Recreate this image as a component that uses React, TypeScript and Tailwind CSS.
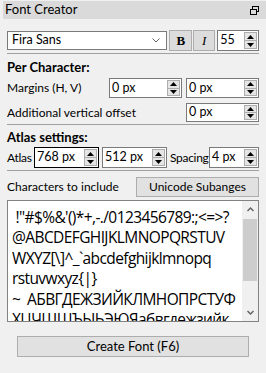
import React from "react";

const ui = { fontFamily: "Lato, 'Noto Sans', sans-serif" };

function Arrows() {
  return (
    <div className="my-[1px] mr-[1px] flex w-[13px] flex-col border border-[#adadad] bg-[#e5e5e5]">
      <div className="flex flex-1 items-center justify-center border-b border-[#adadad]">
        <svg width="7" height="4" viewBox="0 0 7 4">
          <path d="M0 4 L3.5 0 L7 4 Z" fill="#000" />
        </svg>
      </div>
      <div className="flex flex-1 items-center justify-center">
        <svg width="7" height="4" viewBox="0 0 7 4">
          <path d="M0 0 L3.5 4 L7 0 Z" fill="#000" />
        </svg>
      </div>
    </div>
  );
}

function Spin({
  value,
  className,
  focus,
}: {
  value: string;
  className: string;
  focus?: boolean;
}) {
  return (
    <div
      className={
        "flex items-stretch bg-white border " +
        (focus ? "border-black " : "border-[#7a7a7a] ") +
        className
      }
    >
      <div className="flex flex-1 items-center pl-[2px] text-[12.5px] text-black">
        {value}
      </div>
      <Arrows />
    </div>
  );
}

function Separator() {
  return <div className="mx-[7px] h-px bg-[#a0a0a0]" />;
}

const charLines = [
  " !\"#$%&'()*+,-./0123456789:;<=>?",
  "@ABCDEFGHIJKLMNOPQRSTUV",
  "WXYZ[\\]^_`abcdefghijklmnopq",
  "rstuvwxyz{|}",
  "~  АБВГДЕЖЗИЙКЛМНОПРСТУФ",
  "ХЦЧШЩЪЫЬЭЮЯабвгдежзийк",
];

export default function App() {
  return (
    <div
      className="h-[373px] w-[266px] overflow-hidden bg-[#f0f0f0] text-[12px] text-black"
      style={ui}
    >
      {/* title bar */}
      <div className="ml-[3px] mt-[1px] flex h-[18px] items-center justify-between bg-[#dadada] pl-[2px] pr-[7px]">
        <span className="text-[13px]">Font Creator</span>
        <svg width="9" height="9" viewBox="0 0 9 9">
          <rect x="2.5" y="0.5" width="6" height="5" fill="none" stroke="#000" />
          <rect x="0.5" y="3.5" width="6" height="5" fill="#dadada" stroke="#000" />
        </svg>
      </div>

      {/* font row */}
      <div className="mx-[7px] mt-[11px] flex h-[21px] items-stretch gap-[1px]">
        <div className="my-[1px] flex w-[161px] items-center justify-between border border-[#7a7a7a] bg-white pl-[4px] pr-[6px] text-[12.5px]">
          <span>Fira Sans</span>
          <svg width="8" height="5" viewBox="0 0 8 5">
            <path d="M0.5 0.5 L4 4 L7.5 0.5" fill="none" stroke="#606060" />
          </svg>
        </div>
        <div className="ml-[1px] flex w-[23px] items-center justify-center border border-[#adadad] bg-[#dcdcdc]">
          <span className="text-[13px] font-bold" style={{ fontFamily: "'Liberation Serif', serif" }}>
            B
          </span>
        </div>
        <div className="flex w-[22px] items-center justify-center border border-[#adadad] bg-[#dcdcdc]">
          <span className="text-[13px] italic" style={{ fontFamily: "'Liberation Serif', serif" }}>
            I
          </span>
        </div>
        <Spin value="55" className="ml-[1px] w-[42px]" />
      </div>

      <div className="mt-[2px]">
        <Separator />
      </div>

      {/* per character */}
      <div className="mx-[7px] mt-[6px] text-[13px] font-bold leading-[14px]">Per Character:</div>
      <div className="mx-[7px] mt-[4px] flex h-[20px] items-stretch">
        <div className="flex w-[102px] items-center">Margins (H, V)</div>
        <Spin value="0 px" className="w-[73px]" />
        <Spin value="0 px" className="ml-[4px] w-[73px]" />
      </div>
      <div className="mx-[7px] mt-[5px] flex h-[19px] items-stretch">
        <div className="flex w-[179px] items-center">Additional vertical offset</div>
        <Spin value="0 px" className="w-[73px]" />
      </div>

      <div className="mt-[2px]">
        <Separator />
      </div>

      {/* atlas */}
      <div className="mx-[7px] mt-[5px] text-[13px] font-bold leading-[14px]">Atlas settings:</div>
      <div className="mx-[7px] mt-[3px] flex h-[21px] items-stretch">
        <div className="flex w-[27px] items-center tracking-[-0.3px]">Atlas</div>
        <Spin value="768 px" className="w-[65px]" focus />
        <Spin value="512 px" className="ml-[3px] w-[65px]" />
        <div className="flex w-[42px] items-center pl-[3px] tracking-[-0.3px]">Spacing</div>
        <Spin value="4 px" className="w-[50px]" />
      </div>

      <div className="mt-[2px]">
        <Separator />
      </div>

      {/* characters */}
      <div className="mx-[7px] mt-[6px] flex h-[20px] items-center justify-between">
        <span>Characters to include</span>
        <div className="flex h-full w-[123px] items-center justify-center border border-[#adadad] bg-[#e1e1e1]">
          Unicode Subanges
        </div>
      </div>

      <div className="mx-[7px] mt-[3px] flex h-[122px] border border-[#828282] bg-white">
        <div
          className="flex-1 overflow-hidden pl-[4px] pt-[6px] text-[15.5px] leading-[20.4px] whitespace-pre text-black"
          style={{ fontFamily: "'Open Sans', sans-serif", letterSpacing: "-0.6px" }}
        >
          {charLines.map((l, i) => (
            <div key={i}>{l}</div>
          ))}
        </div>
        <div className="flex w-[16px] flex-col items-center bg-[#f0f0f0]">
          <div className="flex h-[17px] w-full items-center justify-center">
            <svg width="7" height="5" viewBox="0 0 7 5">
              <path d="M0.5 4 L3.5 1 L6.5 4" fill="none" stroke="#606060" strokeWidth="1.4" />
            </svg>
          </div>
          <div className="mt-px h-[62px] w-[14px] bg-[#cdcdcd]" />
          <div className="flex-1" />
          <div className="flex h-[17px] w-full items-center justify-center">
            <svg width="7" height="5" viewBox="0 0 7 5">
              <path d="M0.5 1 L3.5 4 L6.5 1" fill="none" stroke="#606060" strokeWidth="1.4" />
            </svg>
          </div>
        </div>
      </div>

      <div className="mx-[17px] mt-[14px] flex h-[21px] items-center justify-center border border-[#adadad] bg-[#e1e1e1] text-[13px]">
        Create Font (F6)
      </div>
    </div>
  );
}
